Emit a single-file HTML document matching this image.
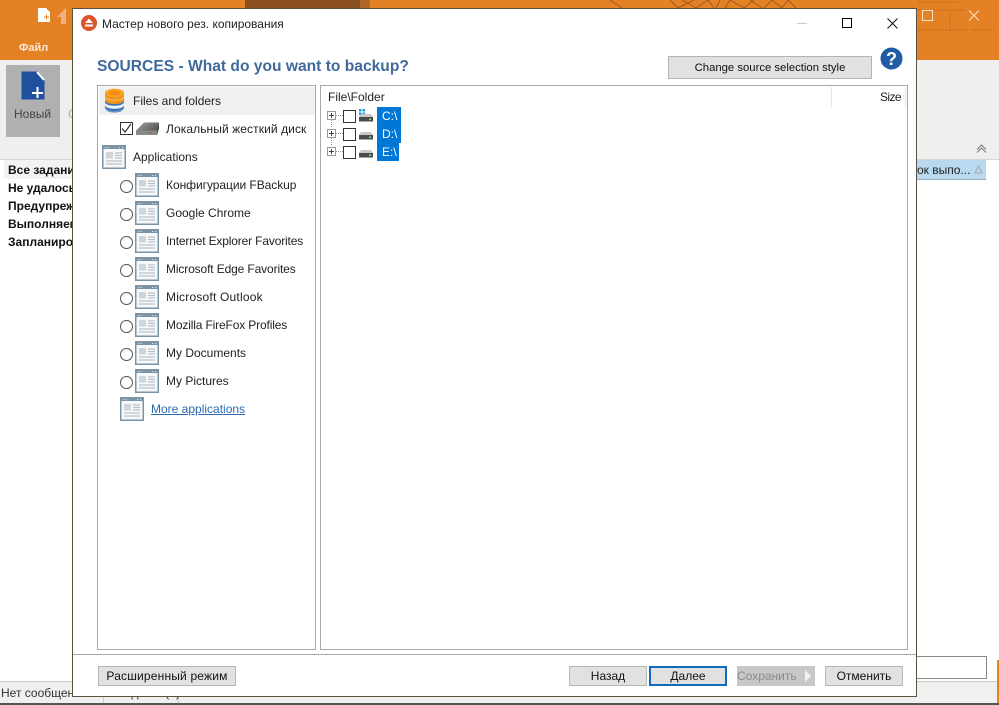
<!DOCTYPE html>
<html><head><meta charset="utf-8"><style>
html,body{margin:0;padding:0}
body{width:999px;height:705px;position:relative;overflow:hidden;background:#fff;font-family:"Liberation Sans","DejaVu Sans",sans-serif;font-size:12px;color:#222}
.a{position:absolute;white-space:nowrap}
.t{position:absolute;white-space:nowrap;font-size:12px;line-height:14px;color:#222}
.btn{position:absolute;height:18px;background:#e1e1e1;border:1px solid #b4b4b4;text-align:center;font-size:12px;line-height:18px;color:#111}
.rad{position:absolute;left:120px;width:11px;height:11px;border:1px solid #555;border-radius:50%;background:#fff}
.exp{position:absolute;left:327px;width:7px;height:7px;border:1px solid #999;background:#fff}
.exp:before{content:"";position:absolute;left:1px;top:3px;width:5px;height:1px;background:#445}
.exp:after{content:"";position:absolute;left:3px;top:1px;width:1px;height:5px;background:#445}
.cb{position:absolute;left:343px;width:11px;height:11px;border:1px solid #333;background:#fff}
.sel{position:absolute;left:377px;height:18px;background:#0078d7;color:#fff;font-size:12px;line-height:18px;padding-left:5px}
</style></head><body>
<!-- app background -->
<div class="a" style="left:0;top:0;width:999px;height:60px;background:#e58125"></div>
<div class="a" style="left:245px;top:0;width:115px;height:8px;background:#8a5020"></div>
<div class="a" style="left:360px;top:0;width:10px;height:8px;background:#b0682a"></div>
<svg class="a" style="left:600px;top:0" width="399" height="40"><g stroke="#9c5a1e" stroke-width="1" fill="none"><path d="M10 0l12 8M70 0l8 8M78 8l16-8M82 0l14 8M96 8l12-8M108 0l6 8M116 8l4-8M125 8l5-8M130 0l14 8M144 8l10-8M150 0l12 8M164 8l8-8M172 0l10 8M182 8l6-8M188 0l8 8"/><path d="M315 10h50M350 14v16M318 30h50M372 30h24M318 2h40" opacity=".6" stroke-dasharray="2 1"/></g></svg>
<div class="a" style="left:0;top:60px;width:999px;height:100px;background:#efefef"></div>
<div class="a" style="left:0;top:159px;width:999px;height:1px;background:#d5d5d5"></div>
<svg class="a" style="left:37px;top:8px" width="40" height="18"><path d="M1 0h8l4 4v10H1z" fill="#fff"/><path d="M7 9h5M9.500 6.500v5" stroke="#e58125" stroke-width="1"/><path d="M24 16v-7h-4l9-9 0 16z" fill="#f0b080"/></svg>
<div class="a" style="left:19px;top:42px;font-size:11px;line-height:13px;font-weight:bold;color:#fbe8d6">Файл</div>
<div class="a" style="left:6px;top:65px;width:54px;height:72px;background:#b0b0b0"></div>
<svg class="a" style="left:21px;top:71px" width="24" height="30"><path d="M0.500 0.500h16l7 8v20h-23z" fill="#1f4f9f"/><path d="M16 1l7 8" stroke="#fff" stroke-width="2"/><path d="M11 22h11M16.500 16v11" stroke="#fff" stroke-width="2"/></svg>
<div class="a" style="left:14px;top:107px;font-size:12px;line-height:14px;color:#444">Новый</div>
<div class="a" style="left:68px;top:107px;font-size:12px;line-height:14px;color:#aaa">С</div>
<div class="a" style="left:4px;top:160px;width:68px;height:19px;background:#f3f3f3"></div>
<div class="a" style="left:8px;top:163px;font-weight:bold;line-height:14px;color:#111">Все задания</div>
<div class="a" style="left:8px;top:181px;font-weight:bold;line-height:14px;color:#111">Не удалось</div>
<div class="a" style="left:8px;top:199px;font-weight:bold;line-height:14px;color:#111">Предупреж</div>
<div class="a" style="left:8px;top:217px;font-weight:bold;line-height:14px;color:#111">Выполняем</div>
<div class="a" style="left:8px;top:235px;font-weight:bold;line-height:14px;color:#111">Запланиров</div>
<div class="a" style="left:917px;top:160px;width:69px;height:20px;background:#b9d9f0;border-bottom:1px solid #9ab;box-sizing:border-box;line-height:21px;font-size:12px;color:#222;overflow:hidden">ок выпо...</div>
<svg class="a" style="left:974px;top:165px" width="10" height="10"><path d="M4.500 1l3.500 7H1z" fill="none" stroke="#a8a8a8"/></svg>
<svg class="a" style="left:976px;top:144px" width="12" height="10"><path d="M1 5.500L5.500 1 10 5.500M1 8.500L5.500 4 10 8.500" fill="none" stroke="#777"/></svg>
<svg class="a" style="left:921px;top:9px" width="62" height="13"><rect x="1.500" y="1.500" width="10" height="10" fill="none" stroke="#fbe3c8"/><path d="M48 1.500l10 10M58 1.500l-10 10" stroke="#fbe3c8"/></svg>
<div class="a" style="left:915px;top:656px;width:70px;height:21px;border:1px solid #888;background:#fff"></div>
<div class="a" style="left:0;top:681px;width:999px;height:22px;background:#f0f0f0;border-top:1px solid #ccc;box-sizing:border-box"></div>
<div class="a" style="left:103px;top:682px;width:1px;height:21px;background:#ccc"></div>
<div class="a" style="left:178px;top:682px;width:1px;height:21px;background:#ccc"></div>
<div class="a" style="left:0;top:703px;width:999px;height:2px;background:#555"></div>
<div class="a" style="left:1px;top:686px;line-height:14px;color:#333">Нет сообщений</div>
<div class="a" style="left:108px;top:686px;line-height:14px;color:#333">В задании(1)</div>
<div class="a" style="left:997px;top:660px;width:2px;height:43px;background:#e58125"></div>
<!-- dialog -->
<div class="a" style="left:72px;top:8px;width:845px;height:689px;box-sizing:border-box;background:#fff;border:1px solid #5d5040"></div>
<svg class="a" style="left:81px;top:15px" width="16" height="16"><circle cx="8" cy="8" r="8" fill="#d9552a"/><path d="M8 3.500l4 4.500H4z M4 9.500h8v2H4z" fill="#fff"/></svg>
<div class="a" style="left:102px;top:17px;font-size:12px;line-height:14px;color:#222">Мастер нового рез. копирования</div>
<div class="a" style="left:797px;top:23px;width:10px;height:1px;background:#ccc"></div>
<div class="a" style="left:842px;top:18px;width:8px;height:8px;border:1px solid #000"></div>
<svg class="a" style="left:887px;top:18px" width="11" height="11"><path d="M0.500 0.500l10 10M10.500 0.500l-10 10" stroke="#111"/></svg>
<div class="a" style="left:97px;top:57px;font-size:15.600px;line-height:19px;font-weight:bold;color:#40699c">SOURCES - What do you want to backup?</div>
<div class="btn" style="left:668px;top:56px;width:202px;height:21px;line-height:22px;font-size:11.300px">Change source selection style</div>
<svg class="a" style="left:880px;top:47px" width="23" height="23"><circle cx="11.500" cy="11.500" r="11" fill="#1f5ca5"/><text x="11.500" y="18" text-anchor="middle" font-family="Liberation Sans" font-weight="bold" font-size="18" fill="#fff">?</text></svg>
<!-- left panel -->
<div class="a" style="left:97px;top:85px;width:219px;height:565px;box-sizing:border-box;border:1px solid #a8a8a8"></div>
<div class="a" style="left:99px;top:87px;width:216px;height:28px;background:#f0f0f0"></div>
<svg class="a" style="left:104px;top:88px" width="21" height="26"><path d="M1 6v14c0 6 19 6 19 0V6z" fill="#3a75b5"/><path d="M1 14c0 5 19 5 19 0v3c0 5-19 5-19 0zM1 19.500c0 5 19 5 19 0v1c0 4-19 4-19 0z" fill="#eef3f8"/><path d="M1 5v7c0 5.500 19 5.500 19 0V5z" fill="#ef9320"/><path d="M1 8.500c0 5 19 5 19 0" fill="none" stroke="#f8c070"/><ellipse cx="10.500" cy="5" rx="9.500" ry="4.200" fill="#f9a51c"/><ellipse cx="10.500" cy="5" rx="6" ry="2.400" fill="#f38b12"/></svg>
<div class="t" style="left:133px;top:94px">Files and folders</div>
<div class="a" style="left:120px;top:122px;width:11px;height:11px;border:1px solid #333;background:#fff"></div>
<svg class="a" style="left:120px;top:122px" width="13" height="13"><path d="M2 6.500l3 3.500 6-8" fill="none" stroke="#333" stroke-width="1.200"/></svg>
<svg class="a" style="left:135px;top:121px" width="25" height="16"><defs><linearGradient id="hd" x1="0" y1="0" x2="1" y2="0.400"><stop offset="0" stop-color="#a2a2a2"/><stop offset="1" stop-color="#5e5e5e"/></linearGradient></defs><path d="M9 1.500h15l-2 8H1z" fill="url(#hd)"/><path d="M1 9.500h21v4.500H1z" fill="#8a8a8a"/><path d="M22 9.500l2-8v6l-2 6.500z" fill="#3c3c3c"/><rect x="11" y="11" width="2" height="1.500" fill="#4a4"/><rect x="14" y="11" width="2" height="1.500" fill="#c44"/></svg>
<div class="t" style="left:166px;top:122px;letter-spacing:.09px">Локальный жесткий диск</div>
<svg width="0" height="0" style="position:absolute"><defs><symbol id="ap" viewBox="0 0 24 24"><rect x="0.750" y="0.750" width="22.500" height="22.500" fill="#f6f8fa" stroke="#7b95a6" stroke-width="1.500"/><rect x="1" y="1" width="22" height="3" fill="#7b95a6"/><path d="M3 2.500h1M5.500 2.500h1M17 2.500h1M20 2.500h1" stroke="#e4ecf1"/><rect x="4" y="7" width="7" height="6.500" fill="#d0d6da"/><path d="M13 8h7M13 10.500h7M13 13h7M4 16h16M4 19h16" stroke="#bac2c8" stroke-width="1.200"/></symbol></defs></svg>
<svg class="a" style="left:102px;top:145px" width="24" height="24"><use href="#ap"/></svg>
<div class="t" style="left:133px;top:150px">Applications</div>
<div class="rad" style="top:180px"></div><svg class="a" style="left:135px;top:173px" width="24" height="24"><use href="#ap"/></svg><div class="t" style="left:166px;top:178px;letter-spacing:-.05px">Конфигурации FBackup</div>
<div class="rad" style="top:208px"></div><svg class="a" style="left:135px;top:201px" width="24" height="24"><use href="#ap"/></svg><div class="t" style="left:166px;top:206px">Google Chrome</div>
<div class="rad" style="top:236px"></div><svg class="a" style="left:135px;top:229px" width="24" height="24"><use href="#ap"/></svg><div class="t" style="left:166px;top:234px;letter-spacing:-.16px">Internet Explorer Favorites</div>
<div class="rad" style="top:264px"></div><svg class="a" style="left:135px;top:257px" width="24" height="24"><use href="#ap"/></svg><div class="t" style="left:166px;top:262px;letter-spacing:-.13px">Microsoft Edge Favorites</div>
<div class="rad" style="top:292px"></div><svg class="a" style="left:135px;top:285px" width="24" height="24"><use href="#ap"/></svg><div class="t" style="left:166px;top:290px;letter-spacing:.2px">Microsoft Outlook</div>
<div class="rad" style="top:320px"></div><svg class="a" style="left:135px;top:313px" width="24" height="24"><use href="#ap"/></svg><div class="t" style="left:166px;top:318px;letter-spacing:-.15px">Mozilla FireFox Profiles</div>
<div class="rad" style="top:348px"></div><svg class="a" style="left:135px;top:341px" width="24" height="24"><use href="#ap"/></svg><div class="t" style="left:166px;top:346px">My Documents</div>
<div class="rad" style="top:376px"></div><svg class="a" style="left:135px;top:369px" width="24" height="24"><use href="#ap"/></svg><div class="t" style="left:166px;top:374px">My Pictures</div>
<svg class="a" style="left:120px;top:397px" width="24" height="24"><use href="#ap"/></svg>
<div class="t" style="left:151px;top:402px;color:#2a6ab0;text-decoration:underline">More applications</div>
<!-- right panel -->
<div class="a" style="left:320px;top:85px;width:588px;height:565px;box-sizing:border-box;border:1px solid #a8a8a8"></div>
<div class="a" style="left:831px;top:87px;width:1px;height:20px;background:#e4e4e4"></div>
<div class="a" style="left:905px;top:87px;width:1px;height:20px;background:#e4e4e4"></div>
<div class="t" style="left:328px;top:90px">File\Folder</div>
<div class="t" style="left:880px;top:90px;letter-spacing:-.6px">Size</div>
<svg class="a" style="left:327px;top:110px" width="18" height="50"><path d="M4.500 10v8M4.500 28v8M9 5.500h7M9 23.500h7M9 41.500h7" stroke="#999" stroke-dasharray="1 1" fill="none"/></svg>
<div class="exp" style="top:111px"></div><div class="exp" style="top:129px"></div><div class="exp" style="top:147px"></div>
<div class="cb" style="top:110px"></div><div class="cb" style="top:128px"></div><div class="cb" style="top:146px"></div>
<svg class="a" style="left:358px;top:108px" width="16" height="50"><rect x="1" y="1" width="2.500" height="2.500" fill="#1a9ad8"/><rect x="4.500" y="1" width="2.500" height="2.500" fill="#1a9ad8"/><rect x="1" y="4.500" width="2.500" height="2.500" fill="#1a9ad8"/><rect x="4.500" y="4.500" width="2.500" height="2.500" fill="#1a9ad8"/>
<path d="M3 6h10l2 3H1z" fill="#c8c8c8"/><rect x="1" y="9" width="14" height="4.500" fill="#4c4c4c"/><rect x="11" y="10.500" width="2" height="1.500" fill="#7d7"/>
<path d="M3 24h10l2 3H1z" fill="#c8c8c8"/><rect x="1" y="27" width="14" height="4.500" fill="#4c4c4c"/><rect x="11" y="28.500" width="2" height="1.500" fill="#7d7"/>
<path d="M3 42h10l2 3H1z" fill="#c8c8c8"/><rect x="1" y="45" width="14" height="4.500" fill="#4c4c4c"/><rect x="11" y="46.500" width="2" height="1.500" fill="#7d7"/></svg>
<div class="sel" style="top:107px;width:19px">C:\</div>
<div class="sel" style="top:125px;width:19px">D:\</div>
<div class="sel" style="top:143px;width:17px">E:\</div>
<!-- footer -->
<div class="a" style="left:73px;top:654px;width:843px;height:1px;background:#a8a8a8"></div>
<div class="btn" style="left:98px;top:666px;width:136px;letter-spacing:.18px">Расширенный режим</div>
<div class="btn" style="left:569px;top:666px;width:76px">Назад</div>
<div class="btn" style="left:649px;top:666px;width:74px;height:16px;border:2px solid #0f6cbd;line-height:16px">Далее</div>
<div class="btn" style="left:737px;top:666px;width:78px;height:20px;background:#c8c8c8;border:0;color:#8a8a8a;text-align:left;line-height:20px">Сохранить</div>
<svg class="a" style="left:804px;top:670px" width="8" height="12"><path d="M1 0l6 6-6 6z" fill="#f2f2f2"/></svg>
<div class="btn" style="left:825px;top:666px;width:76px">Отменить</div>
</body></html>
